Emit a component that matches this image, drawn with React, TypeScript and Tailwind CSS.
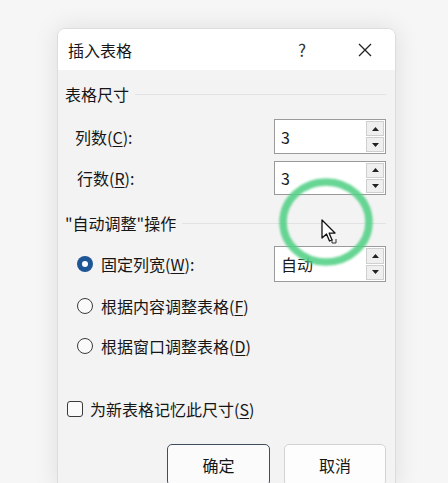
import React from "react";

// 下拉数值框（带上下箭头）
function SpinBox({ value, h }: { value: string; h: string }) {
  return (
    <div className={`flex w-[112px] ${h} border border-[#9a9a9a] bg-white`}>
      <div className="flex flex-1 items-center pl-[6px] text-[16px] text-[#1b1b1b]">{value}</div>
      <div className="flex w-[20px] flex-col gap-[1px] p-[1px]">
        <div className="flex flex-1 items-center justify-center border border-[#cfcfcf] bg-[#efefef]">
          <svg width="7" height="4" viewBox="0 0 7 4">
            <path d="M0 4 L3.5 0 L7 4 Z" fill="#222" />
          </svg>
        </div>
        <div className="flex flex-1 items-center justify-center border border-[#cfcfcf] bg-[#efefef]">
          <svg width="7" height="4" viewBox="0 0 7 4">
            <path d="M0 0 L3.5 4 L7 0 Z" fill="#222" />
          </svg>
        </div>
      </div>
    </div>
  );
}

function Key({ k }: { k: string }) {
  return (
    <>
      (<span className="underline underline-offset-2">{k}</span>)
    </>
  );
}

function Radio({ checked }: { checked?: boolean }) {
  return checked ? (
    <span className="flex h-[16px] w-[16px] items-center justify-center rounded-full bg-[#1d5597]">
      <span className="h-[6px] w-[6px] rounded-full bg-white" />
    </span>
  ) : (
    <span className="h-[16px] w-[16px] rounded-full border border-[#3a3a3a] bg-[#fafafa]" />
  );
}

export default function App() {
  return (
    <div className="relative h-[483px] w-[448px] overflow-hidden bg-[#f6f6f6] font-['Noto_Sans_CJK_SC',sans-serif] text-[#161616]">
      {/* 对话框 */}
      <div className="ml-[57px] mt-[28px] w-[339px] overflow-hidden rounded-t-[8px] border border-[#dcdcdc] shadow-[0_0_24px_rgba(0,0,0,0.10)]">
        {/* 标题栏 */}
        <div className="flex h-[41px] items-center bg-white pl-[10px] pr-[10px]">
          <div className="flex-1 text-[16px]">插入表格</div>
          <div className="flex w-[40px] justify-center text-[17px] text-[#333]">?</div>
          <div className="ml-[23px] flex w-[40px] justify-center">
            <svg width="14" height="14" viewBox="0 0 14 14">
              <path d="M1 1 L13 13 M13 1 L1 13" stroke="#222" strokeWidth="1.3" />
            </svg>
          </div>
        </div>

        {/* 内容 */}
        <div className="flex flex-col bg-[#f3f3f3] pb-[2px] pl-[7px] pr-[9px] pt-[14px] text-[16px]">
          <div className="flex h-[20px] items-center gap-[6px]">
            <span>表格尺寸</span>
            <span className="h-px flex-1 bg-[#e2e2e2]" />
          </div>

          <div className="mt-[15px] flex items-center justify-between pl-[10px]">
            <span>
              列数<Key k="C" />:
            </span>
            <SpinBox value="3" h="h-[35px]" />
          </div>

          <div className="mt-[7px] flex items-center justify-between pl-[12px]">
            <span>
              行数<Key k="R" />:
            </span>
            <SpinBox value="3" h="h-[34px]" />
          </div>

          <div className="mt-[18px] flex h-[20px] items-center gap-[6px]">
            <span>"自动调整"操作</span>
            <span className="h-px flex-1 bg-[#e2e2e2]" />
          </div>

          <div className="mt-[13px] flex items-center justify-between pl-[12px]">
            <span className="flex items-center gap-[8px]">
              <Radio checked />
              <span>
                固定列宽<Key k="W" />:
              </span>
            </span>
            <SpinBox value="自动" h="h-[36px]" />
          </div>

          <div className="mt-[12px] flex h-[24px] items-center gap-[8px] pl-[12px]">
            <Radio />
            <span>
              根据内容调整表格<Key k="F" />
            </span>
          </div>

          <div className="mt-[16px] flex h-[24px] items-center gap-[8px] pl-[12px]">
            <Radio />
            <span>
              根据窗口调整表格<Key k="D" />
            </span>
          </div>

          <div className="mt-[39px] flex h-[24px] items-center gap-[7px] pl-[2px]">
            <span className="h-[16px] w-[16px] rounded-[3px] border border-[#3a3a3a] bg-[#fafafa]" />
            <span>
              为新表格记忆此尺寸<Key k="S" />
            </span>
          </div>

          <div className="mt-[23px] flex justify-end gap-[14px]">
            <button className="flex h-[42px] w-[103px] items-center justify-center rounded-[5px] border-[1.5px] border-[#3f4d5c] bg-[#fbfbfb] text-[16px]">
              确定
            </button>
            <button className="flex h-[42px] w-[102px] items-center justify-center rounded-[5px] border border-[#d2d2d2] bg-[#fdfdfd] text-[16px]">
              取消
            </button>
          </div>
        </div>
      </div>

      {/* 点击提示圈 + 鼠标指针 */}
      <svg className="absolute left-[276px] top-[176px]" width="100" height="94" viewBox="0 0 100 94">
        <defs>
          <filter id="soft" x="-20%" y="-20%" width="140%" height="140%">
            <feGaussianBlur stdDeviation="1.2" />
          </filter>
        </defs>
        <ellipse cx="50" cy="46" rx="43" ry="40" fill="none" stroke="#52d086" strokeWidth="7.5" opacity="0.88" filter="url(#soft)" />
      </svg>
      <svg className="absolute left-[321px] top-[219px]" width="18" height="26" viewBox="0 0 18 26">
        <path d="M1 1 L1 19 L5.5 15 L8.5 22 L11 21 L8.2 14.2 L14 14 Z" fill="#fff" stroke="#111" strokeWidth="1.3" strokeLinejoin="round" />
        <path d="M11 20 L11 24 L15 24 L15 20" fill="none" stroke="#333" strokeWidth="1" />
      </svg>
    </div>
  );
}
